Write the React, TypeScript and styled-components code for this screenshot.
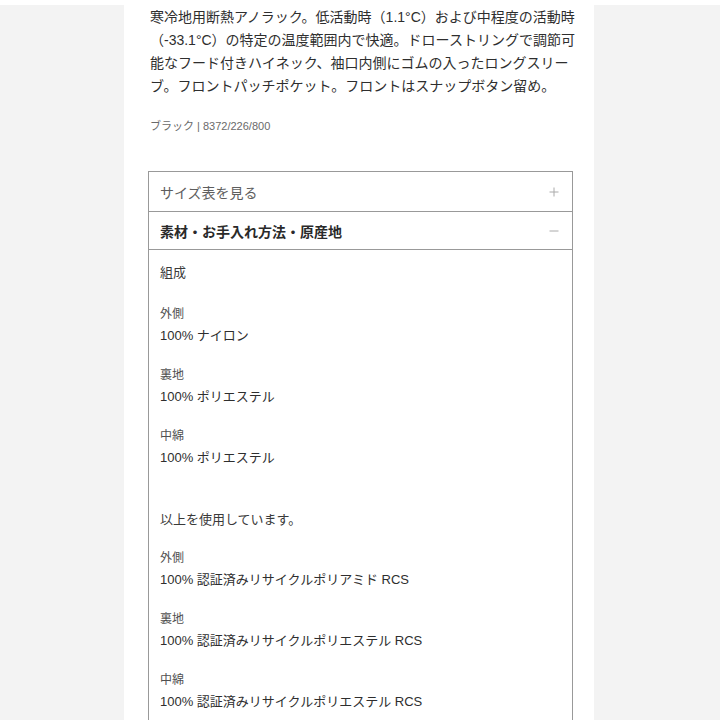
import styled, { createGlobalStyle } from "styled-components";

const GlobalStyle = createGlobalStyle`
  html, body {
    margin: 0;
    padding: 0;
    background: #f3f3f3;
  }
  body {
    font-family: "Liberation Sans", "Noto Sans CJK JP", sans-serif;
    color: #2e2e2e;
  }
`;

type Group = { label: string; value: string };

const composition: Group[] = [
  { label: "外側", value: "100% ナイロン" },
  { label: "裏地", value: "100% ポリエステル" },
  { label: "中綿", value: "100% ポリエステル" },
];

const recycled: Group[] = [
  { label: "外側", value: "100% 認証済みリサイクルポリアミド RCS" },
  { label: "裏地", value: "100% 認証済みリサイクルポリエステル RCS" },
  { label: "中綿", value: "100% 認証済みリサイクルポリエステル RCS" },
];

const descriptionLines = [
  "寒冷地用断熱アノラック。低活動時（1.1°C）および中程度の活動時",
  "（-33.1°C）の特定の温度範囲内で快適。ドローストリングで調節可",
  "能なフード付きハイネック、袖口内側にゴムの入ったロングスリー",
  "ブ。フロントパッチポケット。フロントはスナップボタン留め。",
];

const ToggleIcon = ({ open }: { open: boolean }) => (
  <svg width="10" height="10" viewBox="0 0 10 10">
    <line x1="0.5" y1="5" x2="9.5" y2="5" stroke="#aaa" strokeWidth="1" />
    {!open && (
      <line x1="5" y1="0.5" x2="5" y2="9.5" stroke="#aaa" strokeWidth="1" />
    )}
  </svg>
);

export default function App() {
  return (
    <Page>
      <GlobalStyle />
      <Column>
        <Description>
          {descriptionLines.map((line) => (
            <Line key={line}>{line}</Line>
          ))}
        </Description>
        <ColorRef>ブラック | 8372/226/800</ColorRef>

        <Accordion>
          <Header>
            <HeaderTitle>サイズ表を見る</HeaderTitle>
            <ToggleIcon open={false} />
          </Header>
          <Header $open>
            <HeaderTitle $bold>素材・お手入れ方法・原産地</HeaderTitle>
            <ToggleIcon open />
          </Header>
          <Panel>
            <PanelHeading>組成</PanelHeading>
            {composition.map((g, i) => (
              <Item key={"c" + i}>
                <ItemLabel>{g.label}</ItemLabel>
                <ItemValue>{g.value}</ItemValue>
              </Item>
            ))}
            <PanelHeading $spaced>以上を使用しています。</PanelHeading>
            {recycled.map((g, i) => (
              <Item key={"r" + i}>
                <ItemLabel>{g.label}</ItemLabel>
                <ItemValue>{g.value}</ItemValue>
              </Item>
            ))}
          </Panel>
        </Accordion>
      </Column>
    </Page>
  );
}

const Page = styled.div`
  display: flex;
  justify-content: flex-start;
  min-height: 720px;
  border-top: 5px solid #fff;
  box-sizing: border-box;
  overflow: hidden;
`;

const Column = styled.div`
  margin-left: 124px;
  width: 470px;
  background: #fff;
  padding: 1px 21px 0 24px;
  box-sizing: border-box;
`;

const Description = styled.div`
  padding-left: 2px;
  font-size: 14px;
  line-height: 23px;
  color: #2e2e2e;
`;

const Line = styled.div`
  white-space: nowrap;
`;

const ColorRef = styled.div`
  margin-top: 20px;
  padding-left: 2px;
  font-size: 11px;
  line-height: 16px;
  color: #6a6a6a;
`;

const Accordion = styled.div`
  margin-top: 37px;
  border: 1px solid #999;
  border-bottom: none;
`;

const Header = styled.div<{ $open?: boolean }>`
  display: flex;
  align-items: center;
  justify-content: space-between;
  height: ${(p) => (p.$open ? "37px" : "39px")};
  padding: 0 13px 0 11px;
  border-bottom: 1px solid #999;
`;

const HeaderTitle = styled.span<{ $bold?: boolean }>`
  font-size: 14px;
  font-weight: ${(p) => (p.$bold ? 700 : 400)};
  color: ${(p) => (p.$bold ? "#2a2a2a" : "#5e5e5e")};
`;

const Panel = styled.div`
  padding: 13px 11px 20px;
`;

const PanelHeading = styled.div<{ $spaced?: boolean }>`
  font-size: 13px;
  line-height: 20px;
  color: #3a3a3a;
  margin-top: ${(p) => (p.$spaced ? "41px" : "0")};
`;

const Item = styled.div`
  display: flex;
  flex-direction: column;
  margin-top: 18px;
  &:nth-child(2) {
    margin-top: 21px;
  }
`;

const ItemLabel = styled.span`
  font-size: 12px;
  line-height: 20px;
  color: #505050;
`;

const ItemValue = styled.span`
  margin-top: 1px;
  font-size: 13px;
  line-height: 22px;
  color: #2e2e2e;
`;
